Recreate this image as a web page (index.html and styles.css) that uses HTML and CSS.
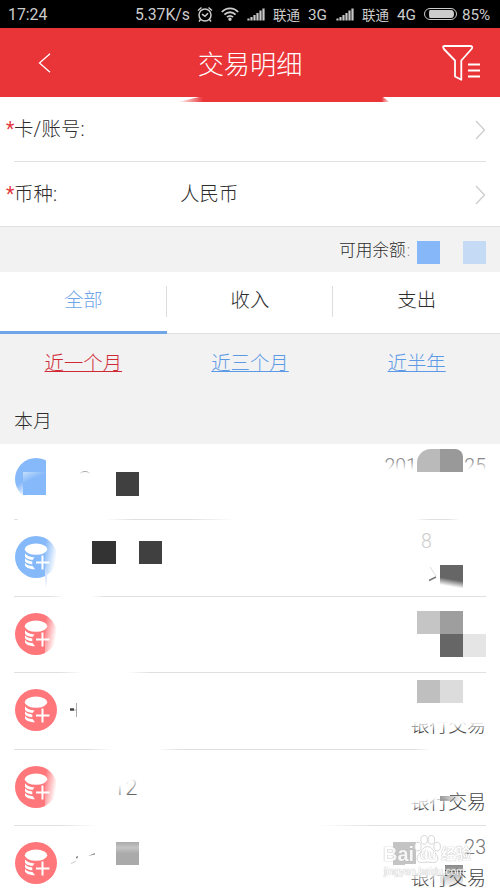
FILE: index.html
```html
<!DOCTYPE html>
<html lang="zh-CN">
<head>
<meta charset="utf-8">
<title>交易明细</title>
<link rel="stylesheet" href="styles.css">
</head>
<body>
<svg width="0" height="0" class="defs" aria-hidden="true">
  <symbol id="signal" viewBox="0 0 18 13"><path d="M1.5 10.5V12.5M4.5 9V12.5M7.5 7V12.5M10.5 5V12.5M13.5 2.5V12.5M16.5 .5V12.5" stroke="#c8c8c8" stroke-width="2.2"/></symbol>
  <symbol id="coins" viewBox="0 0 42 42">
    <circle cx="21" cy="21" r="21" fill="currentColor"/>
    <ellipse cx="21" cy="13.2" rx="11.2" ry="5.6" fill="#fff"/>
    <path d="M10 17.300c2 2.500 5 3.900 9.500 4.100l-2 2.600c-3.500-.3-6.500-1.500-7.500-3.200zM10 22.300c1.500 1.900 4 2.900 7.300 3.200v2.700c-3.500-.3-6.300-1.300-7.300-3zM10 26.700c1.500 2.200 4 3.200 7.500 3.400l2.500 3.200c-5 0-9-1.500-10-3.700z" fill="#fff"/>
    <path d="M27.500 19.500v14M21 26.500h13.500" stroke="#fff" stroke-width="2"/>
  </symbol>
</svg>

<header class="status">
  <span class="time">17:24</span>
  <span class="speed">5.37K/s</span>
  <svg class="alarm" viewBox="0 0 16 17" fill="none" stroke="#ccc" stroke-width="1.500"><circle cx="8" cy="9" r="6"/><path d="M1 4.500 4.500 1.500M15 4.500 11.500 1.500M3.500 13.500 2 15.500M12.500 13.500 14 15.500M5 8.200 8 10.300 11 7.300"/></svg>
  <svg class="wifi" viewBox="0 0 18 14" fill="none" stroke="#ccc" stroke-width="1.800"><path d="M.8 5C5.500.1 12.500.1 17.200 5M3.400 7.700C6.700 4.400 11.300 4.400 14.600 7.700M6 10.200C7.800 8.400 10.200 8.400 12 10.200"/><circle cx="9" cy="12.200" r=".8" fill="#ccc"/></svg>
  <svg class="signal"><use href="#signal"/></svg>
  <span class="carrier">联通</span><span class="net">3G</span>
  <svg class="signal"><use href="#signal"/></svg>
  <span class="carrier">联通</span><span class="net">4G</span>
  <i class="battery"></i>
  <span class="percent">85%</span>
</header>

<nav class="bar">
  <svg class="back" viewBox="0 0 12 20"><path d="M11.500.7 1 10 11.500 19.300" fill="none" stroke="#fff" stroke-width="1.300"/></svg>
  <h1>交易明细</h1>
  <svg class="filter" viewBox="0 0 38 36" fill="none" stroke="#fff" stroke-width="1.800" stroke-linejoin="round"><path d="M2.300 1H28Q31 1 30 3.500L19.300 15.500V34.800L13 31.500V15.500L2.300 4.500Q0 1 2.300 1Z"/><path d="M26 19.500H38M26 25.500H38M26 31.500H38"/></svg>
  <i class="smear"></i>
</nav>

<section class="form">
  <div class="field"><b>*</b><label>卡/账号:</label><span class="value"></span>
    <svg class="chevron" viewBox="0 0 11 20"><path d="M1 1 9.500 10 1 19" fill="none" stroke="#ccc" stroke-width="1.300"/></svg></div>
  <div class="field"><b>*</b><label>币种:</label><span class="value">人民币</span>
    <svg class="chevron" viewBox="0 0 11 20"><path d="M1 1 9.500 10 1 19" fill="none" stroke="#ccc" stroke-width="1.300"/></svg></div>
</section>

<div class="balance"><span>可用余额<em>:</em></span><i class="block blue"></i><i class="block pale"></i></div>

<div class="tabs"><span class="on">全部</span><span>收入</span><span>支出</span></div>
<div class="ranges"><a class="on">近一个月</a><a>近三个月</a><a>近半年</a></div>
<h2>本月</h2>

<main>
  <section class="row r1">
    <svg class="coin blue-ink" viewBox="0 0 42 42"><circle cx="21" cy="21" r="21" fill="currentColor"/></svg>
    <i class="veil v0"></i><i class="veil v1"></i><i class="tile t-icon"></i><i class="arc"></i><i class="tile t1"></i>
    <span class="date">201&nbsp;&nbsp;&nbsp;&nbsp;&nbsp;&nbsp;&nbsp;&nbsp;&nbsp;&nbsp;25</span><i class="veil v2"></i>
    <i class="tile t2"></i><i class="tile t3"></i><i class="fade f1"></i><i class="fade f2"></i>
  </section>
  <section class="row r2">
    <svg class="coin blue-ink"><use href="#coins"/></svg>
    <i class="edge"></i><i class="drip"></i><i class="tile t4"></i><i class="tile t5"></i>
    <span class="ghost">8</span><svg class="stroke" viewBox="0 0 12 16"><path d="M2 1 8 10" stroke="#ddd"/><path d="M1 14.500 8 11" stroke="#777" stroke-width="1.500"/></svg><i class="tile t6"></i><i class="fade f3"></i>
  </section>
  <section class="row r3">
    <svg class="coin"><use href="#coins"/></svg><i class="edge"></i>
    <i class="tile t7"></i><i class="tile t8"></i><i class="tile t9"></i><i class="tile t10"></i><i class="fade f4"></i>
  </section>
  <section class="row r4">
    <svg class="coin"><use href="#coins"/></svg>
    <svg class="mark" viewBox="0 0 10 16"><path d="M1 7.500H5" stroke="#444" stroke-width="2.500"/><path d="M5 8H8M7.500 1V15" stroke="#aaa"/></svg>
    <i class="tile t11"></i><i class="tile t12"></i>
    <span class="kind">银行交易</span><i class="veil v3"></i><i class="fade f5"></i><i class="fade f7"></i>
  </section>
  <section class="row r5">
    <svg class="coin"><use href="#coins"/></svg><i class="edge"></i>
    <span class="name">12</span><i class="veil v4"></i>
    <span class="kind">银行交易</span><i class="veil v5"></i><i class="smudge"></i><i class="fade f6"></i>
  </section>
  <section class="row r6">
    <svg class="coin"><use href="#coins"/></svg>
    <svg class="specks" viewBox="0 0 26 13"><path d="M1 11.500 6 9" stroke="#ccc"/><path d="M6 5 8 4 7 7Z" fill="#555"/><path d="M18 4 25 1V2.500Z" fill="#888"/></svg>
    <i class="tile t13"></i><i class="tile t14"></i><i class="tile t15"></i>
    <span class="date">23</span><span class="kind">银行交易</span><i class="veil v6"></i>
    <div class="watermark">
      <span class="brand">Bai</span>
      <svg class="paw" viewBox="0 0 28 30"><g fill="#fff" stroke="#ccc"><ellipse cx="4" cy="12" rx="3.400" ry="4.500"/><ellipse cx="10.500" cy="5" rx="3.400" ry="4.500"/><ellipse cx="18" cy="5" rx="3.400" ry="4.500"/><ellipse cx="24" cy="12" rx="3.400" ry="4.500"/><path d="M14 12C9 12 8 17 5 20C1 25 4 29 9 28.500Q14 27.500 19 28.500C24 29 27 25 23 20C20 17 19 12 14 12Z"/></g></svg>
      <span class="du">du</span><span class="cn">经验</span>
      <small>jingyan.baidu.com</small>
    </div>
  </section>
</main>
</body>
</html>
```
FILE: styles.css
```css
* { box-sizing: border-box; }
body {
  margin: 0;
  width: 500px;
  height: 889px;
  overflow: hidden;
  background: #fff;
  color: #2c2c2c;
  font: 300 19.4px/28px Roboto, "Noto Sans CJK SC", sans-serif;
}
i, em { font-style: normal; }
.defs { position: absolute; }

.status {
  display: flex;
  align-items: center;
  height: 28px;
  padding-left: 8px;
  background: #000;
  color: #ccc;
  font-size: 15.8px;
  font-weight: 400;
  white-space: nowrap;
}
.status > * { flex: none; }
.status > span { padding-top: 1px; }
.time { width: 127px; }
.speed { width: 62px; letter-spacing: -.1px; }
.alarm { width: 16px; height: 17px; }
.wifi { width: 18px; height: 14px; margin-left: 8px; }
.signal { width: 18px; height: 13px; margin-left: 8px; }
.carrier { width: 35px; margin-left: 8px; font-size: 13.5px; }
.net { width: 20px; font-size: 15.3px; }
.battery {
  width: 33px;
  height: 12px;
  margin-left: 7px;
  padding: 1px 2px 1px 4px;
  border: 1.5px solid #ccc;
  border-radius: 6px;
  background: #ccc content-box;
}
.percent { margin-left: 5px; font-size: 15.2px; }

.bar {
  position: relative;
  display: flex;
  align-items: center;
  height: 69px;
  padding: 0 20px 0 38px;
  background: #e93438;
  color: #fff;
}
.back { width: 13px; height: 20px; }
.bar h1 { flex: 1; margin: 4px 0 0 7px; text-align: center; font-size: 26.2px; font-weight: 300; }
.filter { width: 38px; height: 36px; }
.smear {
  position: absolute;
  left: 178px;
  top: 68px;
  width: 212px;
  height: 6px;
  background: #e93438;
  clip-path: polygon(0 100%, 12% 0, 96% 0, 100% 100%);
  mask: linear-gradient(90deg, transparent, #000 12%, #000 96%, transparent);
}

.form { height: 130px; border-bottom: 1px solid #e0e0e0; }
.field { display: flex; align-items: center; height: 65px; margin-right: 14px; padding-left: 6px; }
.field:first-child { background: linear-gradient(#e0e0e0, #e0e0e0) 14px 100% / 472px 1px no-repeat; }
.field b { width: 8px; color: #e23a40; font-weight: 400; }
.field label { width: 166px; letter-spacing: .15px; }
.value { flex: 1; }
.chevron { width: 11px; height: 20px; }

.balance {
  display: flex;
  align-items: center;
  height: 45px;
  padding-left: 339px;
  background: #f2f2f2;
  font-size: 16.7px;
}
.balance span { width: 78px; padding-top: 2px; white-space: nowrap; }
.balance em { margin-left: 1px; color: #888; }
.block { width: 23px; height: 23px; margin-top: 6px; }
.blue { background: #86b7f9; }
.pale { margin-left: 23px; background: #c4daf5; }

.tabs { display: grid; grid-template-columns: repeat(3, 1fr); height: 62px; border-bottom: 1px solid #dfdfdf; text-align: center; }
.tabs span { height: 61px; padding-top: 15px; background: linear-gradient(#ddd, #ddd) 100% 14px / 1px 31px no-repeat; }
.tabs span:last-child { background: none; }
.tabs .on { height: 62px; border-bottom: 3px solid #70a5e8; color: #70a5e8; }
.ranges { display: grid; grid-template-columns: repeat(3, 1fr); height: 64px; padding-top: 16px; background: #f2f2f2; text-align: center; }
.ranges a { color: #5c9ae6; text-decoration: underline; text-decoration-thickness: 1px; text-underline-offset: 1px; }
.ranges .on { color: #d02a36; }
h2 { height: 46px; margin: 0; padding: 10px 14px 8px; background: #f2f2f2; font-size: 18.9px; font-weight: 300; line-height: 28px; }

.row {
  position: relative;
  height: 76.4px;
  padding: 16px 14px 0 15px;
  background: linear-gradient(#e0e0e0, #e0e0e0) 14px 100% / 472px 1px no-repeat;
}
.coin { display: block; width: 42px; height: 42px; color: #ff767b; }
.blue-ink { color: #86b9f9; }
.r1 .coin { margin-top: -2px; }
.date, .kind { position: absolute; right: 14px; color: #777; }
.date { top: 8px; font-size: 19.5px; }
.kind { top: 39px; color: #444; font-size: 18.9px; }
.name { position: absolute; left: 113px; top: 24px; color: #666; font-size: 22px; }

/* masks over private details */
.veil, .fade, .tile, .edge, .arc, .drip, .ghost, .stroke, .mark, .specks, .smudge { position: absolute; }
.tile { width: 23px; height: 23px; }
.v0 { left: 14px; top: 34px; width: 46px; height: 30px; background: linear-gradient(150deg, transparent 15%, #fff 45%); }
.v1 { left: 46px; top: 12px; width: 14px; height: 50px; background: #fff; }
.t-icon { left: 23px; top: 28px; background: linear-gradient(155deg, #c6dffd, #86b9f9 35%); }
.arc { left: 80px; top: 27px; width: 10px; height: 6px; border-top: 1.5px solid #aaa; border-radius: 50%; }
.t1 { left: 116px; top: 28px; height: 24px; background: #404040; }
.v2 { left: 380px; top: 17px; width: 110px; height: 24px; background: linear-gradient(transparent, #fff 38%); }
.r1 .date { top: 9px; color: #888; }
.t2 { left: 417px; top: 5px; background: #bababa; border-radius: 14px 0 0; }
.t3 { left: 440px; top: 5px; background: #999; border-radius: 0 8px 0 0; }
.fade { bottom: 0; height: 2px; background: linear-gradient(90deg, transparent, #fff 25%, #fff 75%, transparent); }
.f1 { left: 18px; width: 115px; background: linear-gradient(90deg, #fff 75%, transparent); }
.f2 { left: 190px; width: 300px; background: linear-gradient(90deg, transparent, #fff 15%, #fff 75%, transparent 80%, transparent 86%, #fff 90%); }
.edge { left: 45px; top: 12px; width: 16px; height: 48px; background: linear-gradient(100deg, transparent 10%, #fff 65%); }
.drip { left: 45px; top: 48px; width: 2px; height: 20px; background: linear-gradient(#b9d5fa, #fff); }
.t4 { left: 92px; top: 21px; width: 24px; background: #333; }
.t5 { left: 139px; top: 21px; background: #404040; }
.ghost { left: 421px; top: 8px; color: #ccc; }
.stroke { left: 428px; top: 46px; width: 12px; height: 16px; }
.t6 { left: 440px; top: 45px; background: linear-gradient(190deg, #666 60%, #fff 88%); }
.f3 { left: 50px; width: 55px; }
.t7 { left: 417px; top: 14px; background: #c5c5c5; }
.t8 { left: 440px; top: 14px; background: #9e9e9e; }
.t9 { left: 440px; top: 37px; background: #666; }
.t10 { left: 463px; top: 37px; background: #e5e5e5; }
.f4 { left: 60px; width: 90px; }
.mark { left: 69px; top: 29px; width: 10px; height: 16px; }
.t11 { left: 417px; top: 7px; background: #bfbfbf; }
.t12 { left: 440px; top: 7px; background: #dcdcdc; }
.v3 { left: 405px; top: 38px; width: 85px; height: 20px; background: linear-gradient(#fff 55%, transparent); }
.f5 { left: 90px; width: 90px; }
.f7 { left: 415px; width: 75px; background: linear-gradient(90deg, transparent, #fff 20%); }
.v4 { left: 110px; top: 24px; width: 34px; height: 24px; background: linear-gradient(155deg, #fff 38%, transparent 75%); }
.v5 { left: 400px; top: 38px; width: 50px; height: 25px; background: linear-gradient(170deg, #fff 45%, transparent 75%); }
.smudge { left: 440px; top: 46px; width: 23px; height: 5px; background: linear-gradient(90deg, #999, transparent); }
.f6 { left: 60px; width: 370px; background: linear-gradient(90deg, transparent, #fff 10%, #fff 70%, transparent 85%); }
.r6 { background: none; }
.specks { left: 70px; top: 26px; width: 26px; height: 13px; }
.t13 { left: 116px; top: 16px; background: linear-gradient(#aaa, #c4c4c4 25%, #aaa 50%); }
.t14 { left: 393px; top: 16px; background: #c4c4c4; }
.t15 { left: 440px; top: 39px; background: linear-gradient(#888, #ddd 65%, #fff); }
.v6 { left: 405px; top: 38px; width: 40px; height: 18px; background: linear-gradient(#fff 50%, transparent); }

.watermark { position: absolute; left: 383px; top: 10px; width: 90px; height: 48px; color: #fff; text-shadow: 0 0 1px #aaa, 0 0 1px #aaa; font: 700 20px/24px "Liberation Sans", "Noto Sans CJK SC", sans-serif; opacity: .85; }
.brand, .du, .cn, .watermark small, .paw { position: absolute; }
.brand { left: 0; top: 6px; }
.paw { left: 31px; top: -1px; width: 27px; height: 29px; }
.du { left: 37px; top: 10px; font-size: 13px; line-height: 18px; }
.cn { left: 58px; top: 6px; font-size: 15px; white-space: nowrap; }
.watermark small { left: 1px; top: 29px; font-size: 10px; line-height: 14px; font-weight: 400; }
```
